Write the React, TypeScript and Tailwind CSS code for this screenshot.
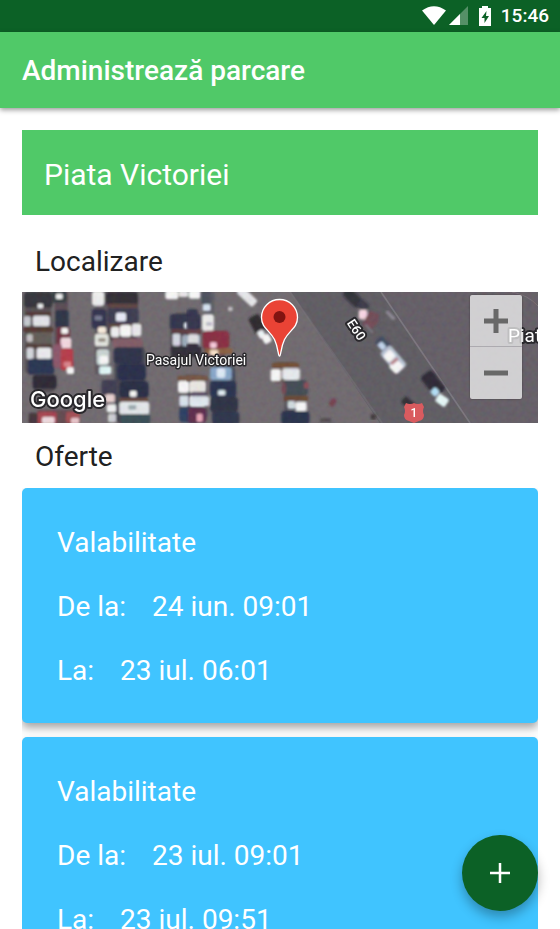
import React from "react";

type Offer = { id: number; from: string; to: string };

const offers: Offer[] = [
  { id: 1, from: "24 iun. 09:01", to: "23 iul. 06:01" },
  { id: 2, from: "23 iul. 09:01", to: "23 iul. 09:51" },
];

// x, y, width, height, colour and optional rotation of a shape in the aerial view
type Blob = [number, number, number, number, string, number?];

// shaded strips of asphalt beneath the parked cars
const shade: Blob[] = [
  [14, 20, 80, 250, "#4f464c"], [38, 262, 68, 60, "#484249"], [50, 374, 130, 50, "#5c3f47"],
  [104, 20, 40, 230, "#54424d"], [224, 20, 38, 250, "#565059"], [262, 20, 92, 150, "#453b42"],
  [284, 180, 92, 236, "#3b3b4a"], [452, 84, 84, 130, "#403a44"], [478, 270, 84, 140, "#4d4550"],
  [550, 20, 34, 120, "#54545f"], [552, 140, 64, 80, "#5d3f49"], [576, 240, 70, 180, "#3b3f52"],
  [758, 232, 78, 62, "#5a4a46"], [794, 286, 62, 130, "#43414b"],
];

const westRows: Blob[] = [
  [12, 20, 86, 48, "#2c2931"], [53, 56, 16, 14, "#f4f6f8"], [16, 80, 76, 14, "#4a2f2b"],
  [39, 92, 50, 31, "#e8eaf0"], [11, 94, 21, 29, "#c9ccd4"], [10, 126, 90, 16, "#4c2d28"],
  [22, 142, 72, 36, "#5c5450"], [20, 148, 18, 22, "#c6c4c6"], [18, 178, 79, 12, "#49302c"],
  [50, 188, 44, 34, "#f2f2f5"], [20, 188, 21, 34, "#d9dbe2"], [23, 221, 80, 47, "#1f2a4a"],
  [38, 270, 72, 42, "#201f2c"], [52, 380, 58, 36, "#a83a46"], [66, 396, 38, 20, "#f4dfe4"],
  [26, 383, 27, 34, "#3a2931"], [138, 380, 42, 34, "#a2454b"], [153, 398, 24, 18, "#f0c8cc"],
  [96, 18, 44, 36, "#29343a"], [108, 26, 20, 16, "#f5f7f8"], [106, 74, 40, 56, "#222b3d"],
  [110, 126, 40, 56, "#6b2735"], [124, 129, 20, 17, "#fff"], [122, 158, 32, 32, "#fadde5"],
  [100, 178, 26, 70, "#8a5066"], [122, 190, 38, 66, "#b83040"], [131, 230, 22, 16, "#dd8085"],
  [140, 247, 22, 20, "#fff"], [216, 18, 36, 44, "#f4f4f4"], [215, 72, 45, 60, "#272844"],
  [224, 92, 22, 14, "#73758e"], [234, 126, 24, 18, "#fff3e0"], [224, 146, 42, 38, "#e9ece4"],
  [235, 160, 22, 10, "#8e857b"], [230, 193, 38, 47, "#cdd8d7"], [238, 212, 26, 24, "#fff"],
  [238, 244, 36, 24, "#e5ffff"], [244, 284, 46, 46, "#353349"], [256, 328, 28, 24, "#efd5d5"],
  [260, 358, 28, 24, "#f7f8f8"], [264, 386, 24, 26, "#d2d3d7"],
  [258, 20, 96, 41, "#26242c"], [264, 64, 92, 55, "#32304a"], [288, 83, 30, 26, "#eef1ff"],
  [264, 56, 88, 13, "#583b37"], [270, 116, 96, 13, "#583b32"], [273, 126, 25, 30, "#f5f5f5"],
  [300, 120, 34, 35, "#fff"], [336, 116, 28, 38, "#eeeef1"], [278, 160, 90, 26, "#7d5561"],
  [281, 187, 86, 49, "#20263f"], [292, 237, 86, 49, "#1e2341"], [298, 288, 88, 52, "#1b203b"],
  [330, 318, 20, 17, "#fff"], [298, 338, 86, 14, "#603c32"], [298, 350, 90, 38, "#e9edf1"],
  [325, 360, 24, 14, "#9babb0"], [303, 388, 88, 30, "#2d444d"],
  [436, 16, 39, 27, "#fff"], [476, 16, 28, 20, "#eee"], [506, 16, 36, 25, "#fff"],
  [449, 87, 94, 48, "#252b43"], [493, 114, 24, 16, "#e9efff"], [456, 132, 88, 14, "#543235"],
  [458, 146, 23, 36, "#d8dce8"], [486, 150, 54, 34, "#9dacbf"], [452, 184, 92, 32, "#25232f"],
  [472, 272, 74, 16, "#704a38"], [474, 288, 33, 35, "#fff"], [509, 290, 42, 33, "#ece8e4"],
  [478, 332, 28, 32, "#dde7f2"], [511, 332, 41, 32, "#fff"], [478, 366, 74, 46, "#22345a"],
];

const middleRows: Blob[] = [
  [-10, 72, 34, 64, "#2b2c45"], [-10, 134, 37, 16, "#60353c"], [-6, 148, 32, 28, "#e4e4e8"],
  [-10, 174, 36, 30, "#272431"], [-10, 272, 64, 15, "#71503e"], [0, 288, 48, 34, "#f0ece8"],
  [4, 320, 46, 16, "#51435e"], [0, 334, 58, 30, "#e4edf6"], [-6, 367, 54, 47, "#582443"],
  [20, 386, 18, 24, "#f0a5bb"],
  [34, 18, 28, 42, "#424756"], [38, 58, 24, 20, "#dceafa"], [36, 88, 36, 50, "#f5f3f2"],
  [48, 112, 18, 10, "#b8b9c8"], [38, 137, 80, 55, "#862039"], [60, 172, 20, 17, "#ffcde0"],
  [46, 190, 82, 17, "#875a39"], [60, 194, 24, 18, "#ffe8ce"], [60, 246, 66, 40, "#84a7cc"],
  [80, 250, 26, 28, "#e5f1ff"], [60, 287, 78, 49, "#1f2745"], [84, 316, 22, 15, "#e8f8ff"],
  [60, 336, 84, 44, "#20253b"], [68, 380, 80, 38, "#242b42"],
  [138, 22, 66, 26, "#ededf0", 43], [114, 66, 14, 12, "#c8c6ca"],
  [184, 90, 36, 54, "#211e24", -28], [204, 136, 20, 23, "#f7fbff", -30], [218, 148, 24, 27, "#fff", -30],
  [246, 234, 80, 14, "#6f452a"], [242, 252, 31, 37, "#fff"], [276, 250, 54, 35, "#edf1f5"],
  [280, 286, 74, 46, "#38434d"], [276, 294, 12, 34, "#713d4a"], [342, 292, 14, 18, "#8c4450"],
  [282, 332, 72, 17, "#65402c"], [292, 348, 24, 24, "#d4e0e6"], [316, 350, 34, 29, "#fff"],
  [274, 378, 84, 40, "#1c2543"], [420, 340, 16, 24, "#713447", 35],
  [458, 22, 60, 32, "#25252f", 45], [502, 48, 34, 26, "#303040", 45], [506, 74, 26, 29, "#ffdbe8"],
  [526, 80, 34, 50, "#704350", 30], [390, 400, 34, 12, "#494149"],
];

const avenue: Blob[] = [
  [26, 96, 28, 20, "#6b4450", 40], [74, 86, 34, 10, "#8c8994", 45], [10, 128, 34, 6, "#7b7882", 50],
  [46, 164, 48, 30, "#39425a", 48], [54, 174, 23, 18, "#c6daf4", 48],
  [60, 202, 80, 42, "#b9c4d6", 50], [74, 198, 28, 30, "#fff", 45], [92, 228, 34, 34, "#fff", 45],
  [98, 216, 10, 26, "#bd8189", 50],
  [182, 274, 74, 42, "#211d29", 52], [214, 310, 22, 22, "#b7e5ff", 45], [228, 332, 36, 28, "#ebffff", 35],
  [124, 344, 44, 24, "#25202c", 40], [32, 388, 16, 16, "#352d32"],
];

function Blobs({ items }: { items: Blob[] }) {
  return (
    <>
      {items.map(([x, y, w, h, fill, turn], i) => (
        <rect
          key={i}
          x={x}
          y={y}
          width={w}
          height={h}
          rx={Math.min(w, h) / 4}
          fill={fill}
          transform={turn ? `rotate(${turn} ${x + w / 2} ${y + h / 2})` : undefined}
        />
      ))}
    </>
  );
}

function AerialView() {
  return (
    <svg
      className="block h-full w-full"
      viewBox="0 0 516 131"
      preserveAspectRatio="xMidYMid slice"
      role="img"
      aria-label="Piata Victoriei"
      fontFamily="Roboto, sans-serif"
    >
      <defs>
        <filter id="soften" x="0" y="0" width="100%" height="100%">
          <feGaussianBlur stdDeviation="3.2" />
        </filter>
        <filter id="grain" x="0" y="0" width="100%" height="100%">
          <feTurbulence type="fractalNoise" baseFrequency="0.2" numOctaves="2" seed="4" />
          <feColorMatrix values="0.6 0 0 0 0.1  0 0.6 0 0 0.1  0 0 0.6 0 0.1  0 0 0 0 0.12" />
        </filter>
      </defs>
      <rect width="516" height="131" fill="#6a6469" />
      <path d="M269 0H516V131H358Z" fill="#5e5760" />
      <path d="M269 0H359L448 131H358Z" fill="#58555c" />
      <path d="M268 0L360 131" stroke="#726b73" strokeWidth="2" opacity=".5" />
      <path d="M359 0L448 131" stroke="#837e87" strokeWidth="1.6" opacity=".7" />
      <path d="M490 0Q506 3 516 14" stroke="#807279" fill="none" opacity=".7" />
      <g filter="url(#soften)" transform="translate(-2 -7) scale(.3333)">
        <Blobs items={shade} />
        <Blobs items={westRows} />
      </g>
      <g filter="url(#soften)" transform="translate(168 -7) scale(.3333)">
        <Blobs items={middleRows} />
      </g>
      <g filter="url(#soften)" transform="translate(338 -7) scale(.3333)">
        <Blobs items={avenue} />
      </g>
      <rect width="516" height="131" filter="url(#grain)" />

      <g fill="#fff" stroke="#29282c" strokeLinejoin="round" paintOrder="stroke">
        <text x="124" y="73" fontSize="14" strokeWidth="3">Pasajul Victoriei</text>
        <text x="486" y="50" fontSize="19" strokeWidth="4">Piat</text>
        <text x="334" y="42" fontSize="13" fontWeight="500" strokeWidth="4" textAnchor="middle" transform="rotate(57 334 38)">E60</text>
        <text x="8" y="115" fontSize="22" fontWeight="500" fontFamily="Inter, sans-serif" strokeWidth="4">Google</text>
      </g>

      <path
        d="M384 111q4 2 8 0q4 2 8 0l2 4q-2 4 0 8q0 5-5 6l-5 2l-5-2q-5-1-5-6q2-4 0-8Z"
        fill="#d95b5f"
      />
      <text x="392" y="125" fontSize="12" fontWeight="500" fill="#fff" textAnchor="middle">1</text>

      <path
        d="M257.500 64C256 64 256.500 56 252.500 47.500C248 38.500 239.500 36 239.500 25.500A18 18 0 0 1 275.500 25.500C275.500 36 267 38.500 262.500 47.500C258.500 56 259 64 257.500 64Z"
        fill="#ea4335"
        stroke="#fff"
        strokeWidth="1.300"
      />
      <circle cx="257.500" cy="25" r="6" fill="#811411" />
    </svg>
  );
}

function StatusBar() {
  return (
    <div className="flex h-8 shrink-0 items-center justify-end bg-[#0c6126] pr-[11px] text-white">
      <svg className="h-5 w-6" viewBox="0 0 24 20" aria-hidden="true">
        <path d="M0 4.500Q12-4 24 4.500L12 19Z" fill="#fff" />
      </svg>
      <svg className="ml-[3px] h-5 w-5" viewBox="0 0 20 20" aria-hidden="true">
        <path d="M19 0V19H0Z" fill="#fff" opacity=".3" />
        <path d="M11 8V19H0Z" fill="#fff" />
      </svg>
      <svg className="ml-2 h-5 w-4" viewBox="0 0 16 20" aria-hidden="true">
        <path d="M5 0H11V2H14V20H2V2H5Z" fill="#fff" />
        <path d="M9.500 5L4.500 12H7.500V17L12 10H9Z" fill="#0c6126" />
      </svg>
      <span className="ml-2 text-[19px] leading-8 font-medium">15:46</span>
    </div>
  );
}

function OfferCard({ offer }: { offer: Offer }) {
  return (
    <li className="flex flex-col gap-8 rounded-[5px] bg-[#40c4ff] px-[35px] pt-[39px] pb-9 text-[28px] leading-8 text-white shadow-[0_5px_8px_rgba(0,0,0,0.35)]">
      <h3>Valabilitate</h3>
      <p className="flex gap-[26px]">
        <span>De la:</span>
        <span>{offer.from}</span>
      </p>
      <p className="flex gap-[26px]">
        <span>La:</span>
        <span>{offer.to}</span>
      </p>
    </li>
  );
}

export default function App() {
  return (
    <div className="relative flex h-screen flex-col overflow-hidden bg-white font-[Roboto,sans-serif]">
      <StatusBar />
      <header className="z-10 flex h-[76px] shrink-0 items-center bg-[#50c968] px-[22px] pt-0.5 shadow-[0_2px_5px_rgba(0,0,0,0.4)]">
        <h1 className="text-[28px] leading-8 font-medium text-white">Administrează parcare</h1>
      </header>

      <main className="flex min-h-0 flex-1 flex-col px-[22px] pt-[22px]">
        <div className="flex h-[85px] shrink-0 items-center bg-[#50c968] px-[22px] pt-1 text-[30px] leading-9 text-white">
          Piata Victoriei
        </div>

        <h2 className="mt-[31px] px-[13px] text-[28px] leading-8 text-[#212121]">Localizare</h2>
        <section className="relative mt-3.5 h-[131px] shrink-0 overflow-hidden">
          <AerialView />
          <div className="absolute top-[3px] right-4 flex w-[52px] flex-col divide-y divide-[#5b5660]/30 rounded-xs bg-white/70 shadow-[0_0_2px_rgba(0,0,0,0.4)]">
            <button type="button" aria-label="Zoom in" className="flex h-[52px] items-center justify-center">
              <svg className="h-6 w-6" viewBox="0 0 24 24" aria-hidden="true">
                <path d="M0 12H24M12 0V24" stroke="#686868" strokeWidth="5" />
              </svg>
            </button>
            <button type="button" aria-label="Zoom out" className="flex h-[52px] items-center justify-center">
              <svg className="h-6 w-6" viewBox="0 0 24 24" aria-hidden="true">
                <path d="M0 12H24" stroke="#686868" strokeWidth="5" />
              </svg>
            </button>
          </div>
        </section>

        <h2 className="mt-[18px] px-[13px] text-[28px] leading-8 text-[#212121]">Oferte</h2>
        <ul className="mt-[15px] flex min-h-0 flex-1 flex-col gap-3.5 overflow-y-auto [scrollbar-width:none] *:shrink-0">
          {offers.map((offer) => (
            <OfferCard key={offer.id} offer={offer} />
          ))}
        </ul>
      </main>

      <button
        type="button"
        aria-label="Adaugă ofertă"
        className="absolute right-[22px] bottom-[18px] z-20 flex size-[76px] items-center justify-center rounded-full bg-[#0c6126] shadow-[0_6px_12px_rgba(0,0,0,0.3)]"
      >
        <svg className="size-5" viewBox="0 0 20 20" aria-hidden="true">
          <path d="M0 10H20M10 0V20" stroke="#fff" strokeWidth="2.500" />
        </svg>
      </button>
    </div>
  );
}
